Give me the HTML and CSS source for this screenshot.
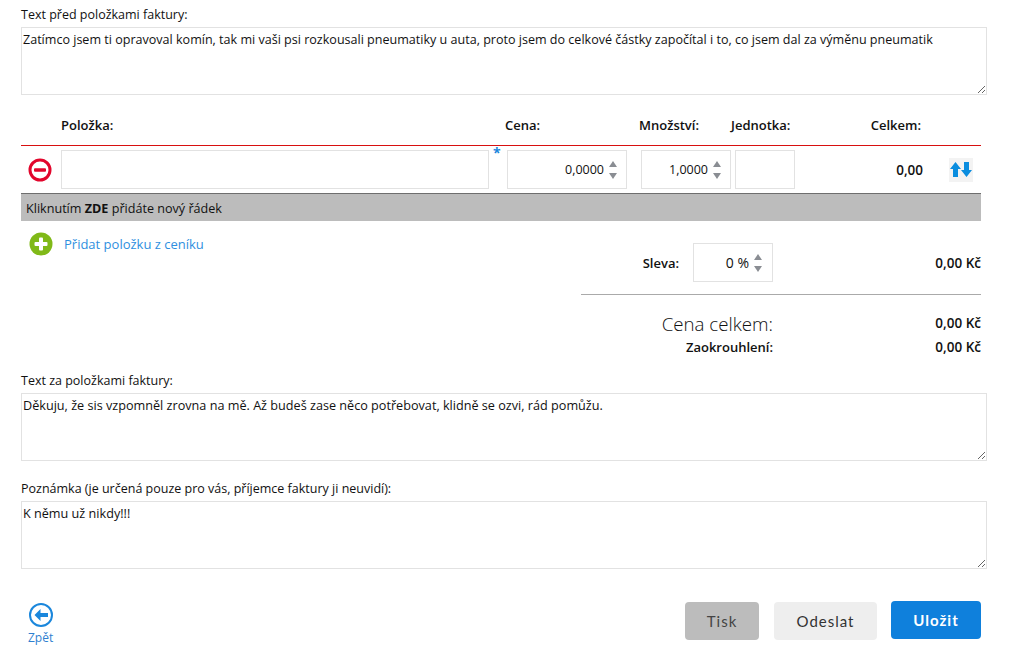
FILE: index.html
```html
<!DOCTYPE html>
<html lang="cs">
<head>
    <meta charset="UTF-8">
    <meta name="viewport" content="width=device-width, initial-scale=1.0">
    <title>Faktura</title>
    <link rel="stylesheet" href="styles.css">
</head>
<body>
    <div class="container">
        <label class="field-label first">Text před položkami faktury:</label>
        <textarea class="note-box note-long">Zatímco jsem ti opravoval komín, tak mi vaši psi rozkousali pneumatiky u auta, proto jsem do celkové částky započítal i to, co jsem dal za výměnu pneumatik</textarea>

        <div class="items-head">
            <span class="col-name">Položka:</span>
            <span class="col-price">Cena:</span>
            <span class="col-qty">Množství:</span>
            <span class="col-unit">Jednotka:</span>
            <span class="col-total">Celkem:</span>
        </div>

        <div class="item-row">
            <svg class="icon-remove" width="24" height="24" viewBox="0 0 24 24">
                <circle cx="12" cy="12" r="10" fill="#fff" stroke="#e2062c" stroke-width="3"/>
                <rect x="6" y="10.2" width="12" height="3.6" rx="1" fill="#e2062c"/>
            </svg>
            <div class="box name-box"></div>
            <span class="required">*</span>
            <div class="box price-box">
                <span>0,0000</span>
                <span class="spinner"><i class="up"></i><i class="down"></i></span>
            </div>
            <div class="box qty-box">
                <span>1,0000</span>
                <span class="spinner"><i class="up"></i><i class="down"></i></span>
            </div>
            <div class="box unit-box"></div>
            <div class="row-total">0,00</div>
            <div class="move">
                <svg width="24" height="24" viewBox="0 0 24 24">
                    <path d="M6.5 4 L12 11 H9 V19 H4 V11 H1 Z" fill="#0a8ddf"/>
                    <path d="M17.5 19 L23 12 H20 V4 H15 V12 H12 Z" fill="#0a8ddf"/>
                </svg>
            </div>
        </div>

        <div class="add-row">Kliknutím <b>ZDE</b> přidáte nový řádek</div>

        <div class="summary">
            <div class="pricelist">
                <svg width="24" height="24" viewBox="0 0 24 24">
                    <circle cx="12" cy="12" r="11.5" fill="#80b918"/>
                    <rect x="10" y="5.5" width="4" height="13" rx="1" fill="#fff"/>
                    <rect x="5.5" y="10" width="13" height="4" rx="1" fill="#fff"/>
                </svg>
                <a class="link">Přidat položku z ceníku</a>
            </div>
            <div class="totals">
                <div class="discount">
                    <b class="discount-label">Sleva:</b>
                    <div class="box discount-box">
                        <span class="discount-value">0 %</span>
                        <span class="spinner"><i class="up"></i><i class="down"></i></span>
                    </div>
                    <b class="amount">0,00 Kč</b>
                </div>
                <div class="total-line">
                    <span class="total-label">Cena celkem:</span>
                    <b class="amount">0,00 Kč</b>
                </div>
                <div class="round-line">
                    <b class="round-label">Zaokrouhlení:</b>
                    <b class="amount">0,00 Kč</b>
                </div>
            </div>
        </div>

        <label class="field-label after-items">Text za položkami faktury:</label>
        <textarea class="note-box">Děkuju, že sis vzpomněl zrovna na mě. Až budeš zase něco potřebovat, klidně se ozvi, rád pomůžu.</textarea>

        <label class="field-label second">Poznámka (je určená pouze pro vás, příjemce faktury ji neuvidí):</label>
        <textarea class="note-box">K němu už nikdy!!!</textarea>

        <div class="footer">
            <a class="back">
                <svg width="24" height="24" viewBox="0 0 24 24">
                    <circle cx="12" cy="12" r="11" fill="none" stroke="#1b87dc" stroke-width="2"/>
                    <path d="M11.5 6 L5.5 12 L11.5 18 V14 H19 V10 H11.5 Z" fill="#1b87dc"/>
                </svg>
                <span>Zpět</span>
            </a>
            <div class="buttons">
                <button class="btn btn-print">Tisk</button>
                <button class="btn btn-send">Odeslat</button>
                <button class="btn btn-save">Uložit</button>
            </div>
        </div>
    </div>
</body>
</html>
```

FILE: styles.css
```css
body {
    font-family: "Open Sans", Arial, sans-serif;
    font-size: 12.5px;
    color: #111;
    margin: 0;
    background-color: white;
}
.container {
    width: 966px;
    padding: 0 22px 0 21px;
}
.field-label {
    display: block;
    line-height: 17px;
    margin-top: 11px;
    margin-bottom: 4px;
}
.field-label.first {
    margin-top: 0;
    padding-top: 6px;
}
.field-label.after-items {
    margin-top: 14px;
}
.field-label.second {
    margin-top: 19px;
}
.note-box {
    display: block;
    box-sizing: border-box;
    width: 966px;
    height: 68px;
    padding: 3px 1px;
    border: 1px solid #e2e2e2;
    font-family: inherit;
    font-size: 12.65px;
    line-height: 17px;
    color: #111;
    outline: none;
}
.note-long {
    font-size: 12.55px;
}
.items-head {
    width: 960px;
    height: 51px;
    display: flex;
    align-items: center;
    box-sizing: border-box;
    padding-top: 10px;
    border-bottom: 1px solid #d81010;
    font-size: 13px;
    font-weight: 600;
}
.col-name { margin-left: 40px; width: 444px; }
.col-price { width: 134px; }
.col-qty { width: 92px; }
.col-unit { width: 70px; }
.col-total { width: 120px; text-align: right; }
.item-row {
    width: 960px;
    display: flex;
    align-items: center;
    height: 47px;
    box-sizing: border-box;
    padding-top: 4px;
    padding-bottom: 4px;
}
.icon-remove {
    margin-left: 7px;
    margin-right: 9px;
}
.box {
    box-sizing: border-box;
    height: 39px;
    border: 1px solid #e2e2e2;
    display: flex;
    align-items: center;
    justify-content: flex-end;
}
.name-box { width: 428px; }
.required {
    width: 18px;
    align-self: flex-start;
    color: #1b87dc;
    font-size: 14px;
    font-weight: 700;
    line-height: 14px;
    padding-left: 4px;
    box-sizing: border-box;
    margin-top: -4px;
}
.price-box { width: 120px; margin-right: 14px; padding-right: 9px; }
.qty-box { width: 90px; margin-right: 4px; padding-right: 9px; }
.unit-box { width: 60px; }
.discount-box { width: 80px; padding-right: 10px; }
.discount-value { font-size: 14px; }
.spinner {
    display: inline-flex;
    flex-direction: column;
    gap: 6px;
    margin-left: 5px;
}
.spinner i {
    display: block;
    width: 0;
    height: 0;
    border-left: 4px solid transparent;
    border-right: 4px solid transparent;
}
.spinner .up { border-bottom: 6px solid #8a8d93; }
.spinner .down { border-top: 6px solid #8a8d93; }
.row-total {
    width: 128px;
    text-align: right;
    font-size: 13.5px;
    font-weight: 600;
}
.move {
    margin-left: 26px;
    width: 24px;
    height: 24px;
    background-color: #f3f3f3;
}
.add-row {
    width: 960px;
    box-sizing: border-box;
    height: 28px;
    line-height: 29px;
    padding-left: 5px;
    font-size: 12.6px;
    background-color: #bcbcbc;
    border-top: 1px solid #6e6e6e;
}
.summary {
    width: 960px;
    display: flex;
    justify-content: space-between;
}
.pricelist {
    display: flex;
    align-items: center;
    height: 24px;
    margin-top: 11px;
    margin-left: 8px;
}
.link {
    margin-left: 11px;
    font-size: 13px;
    color: #2f8fe0;
}
.totals {
    width: 400px;
    padding-top: 22px;
}
.discount {
    display: flex;
    align-items: center;
    justify-content: flex-end;
    padding-bottom: 12px;
    border-bottom: 1px solid #aaa;
}
.discount-label {
    font-size: 13px;
    font-weight: 600;
    margin-right: 14px;
}
.amount {
    font-size: 13.5px;
    font-weight: 600;
    width: 60px;
    text-align: right;
    white-space: nowrap;
}
.discount .amount { margin-left: 148px; }
.total-line {
    display: flex;
    justify-content: flex-end;
    align-items: center;
    height: 26px;
    margin-top: 15px;
}
.total-label { font-size: 18.7px; font-weight: 300; margin-right: 148px; }
.round-line {
    display: flex;
    justify-content: flex-end;
    align-items: center;
    height: 22px;
}
.round-label { font-size: 13px; font-weight: 600; margin-right: 148px; }
.footer {
    width: 960px;
    display: flex;
    justify-content: space-between;
    align-items: flex-start;
    margin-top: 32px;
}
.back {
    display: flex;
    flex-direction: column;
    align-items: center;
    gap: 3px;
    margin-left: 7px;
    padding-top: 2px;
    color: #2f7fd0;
    font-size: 12px;
    line-height: 16px;
}
.buttons {
    display: flex;
    gap: 15px;
    align-items: flex-start;
}
.btn {
    height: 38px;
    border: none;
    border-radius: 4px;
    font-family: "Lato", sans-serif;
    font-size: 15px;
    letter-spacing: 1px;
    margin-top: 1px;
}
.btn-print { width: 74px; background-color: #bcbcbc; color: #444; }
.btn-send { width: 103px; background-color: #eeeeee; color: #333; }
.btn-save { width: 90px; background-color: #0f80dc; color: white; font-weight: 700; margin-top: 0; margin-left: -1px; }
```
